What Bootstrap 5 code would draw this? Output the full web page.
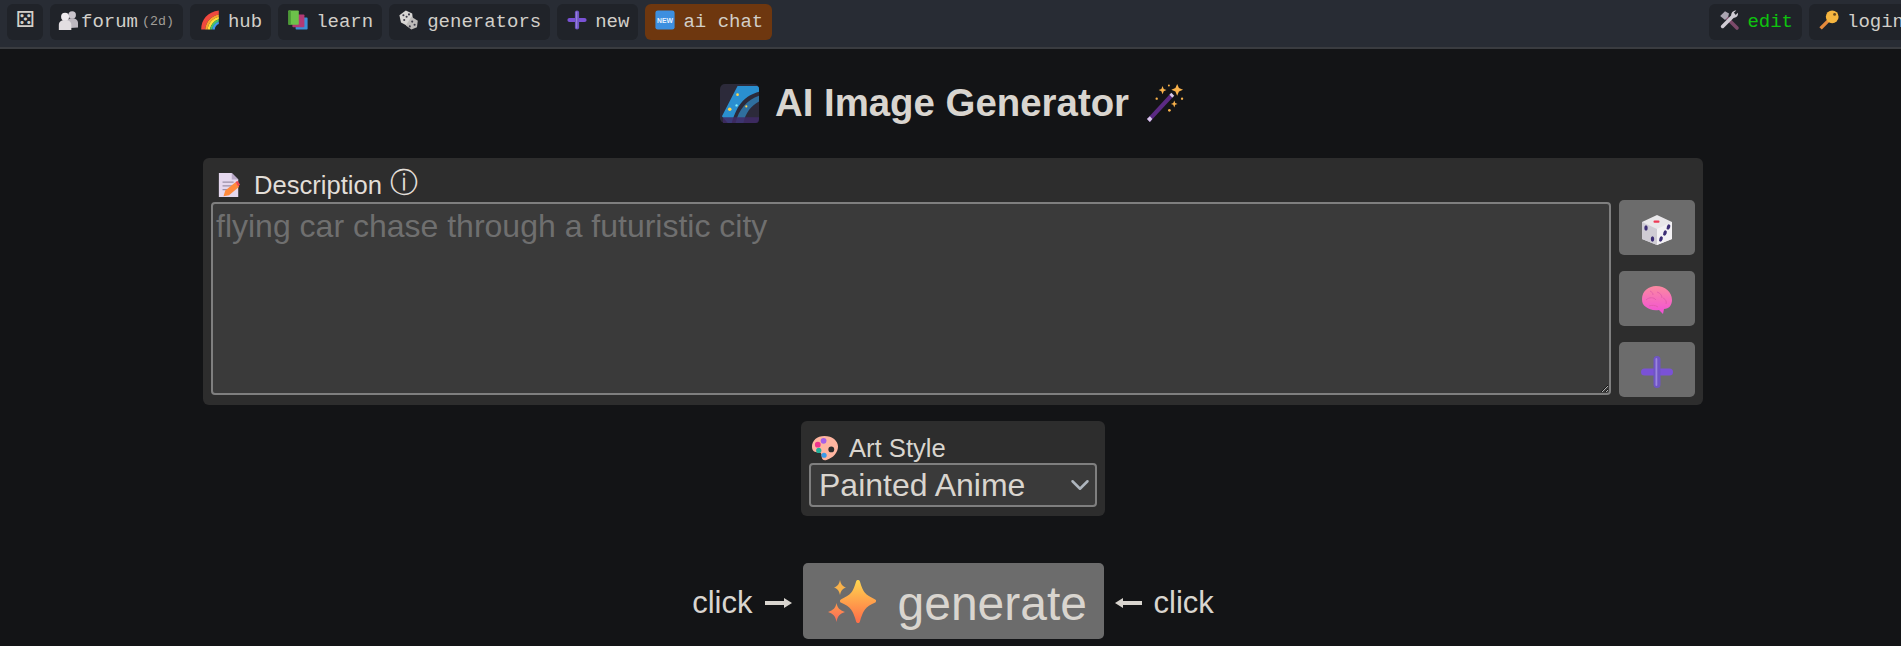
<!doctype html>
<html lang="en" data-bs-theme="dark">
<head>
<meta charset="utf-8">
<title>AI Image Generator</title>
<link href="https://cdn.jsdelivr.net/npm/bootstrap@5.3.0/dist/css/bootstrap.min.css" rel="stylesheet">
<script src="https://cdn.jsdelivr.net/npm/bootstrap@5.3.0/dist/js/bootstrap.bundle.min.js"></script>
<style>
html,body{height:646px;overflow:hidden;background:#131416;color:#d9d5cf;font-family:"Liberation Sans",Arial,sans-serif}
.pagewrap{width:1906px}
.topbar{height:49px;background:#282c34;border-bottom:2px solid #3a3c40;padding:4px 0 0 7px;gap:7px}
.topgroup{gap:7px}
.toplink{height:36px;background:#202329;border-radius:6px;padding:0 9px 0 8px;font-family:"Liberation Mono",monospace;font-size:19px;color:#d2cfc9;text-decoration:none;gap:6px;white-space:nowrap}
.toplink svg{width:24px;height:24px;flex:none;margin-top:-5px}
.toplink.tightlink{gap:4px}
.toplink.tightlink svg{width:20px;height:20px;margin-right:-1px}
.toplink .age{font-size:13.3px;color:#a09d98}
.toplink.chat{background:#6e370f}
.toplink .okgreen{color:#0ec30e}
.toplink.dieglyph{font-family:"DejaVu Sans",sans-serif;font-size:22px;line-height:1;width:36px;padding:0 0 5px}
.righttop{margin-right:-7px}
.pagetitle{font-size:38.4px;font-weight:700;line-height:44px;margin:0;padding-top:32px;gap:16px;color:#d9d5cf}
.pagetitle svg{width:39px;height:39px}
.pagetitle svg:last-child{margin-right:2px}
.panel{background:#2d2d2d;border-radius:6px}
.descpanel{width:1500px;height:247px;margin:33px auto 0;padding:8px}
.labelcol{padding-top:4px;padding-bottom:2px}
.fieldlabel{font-size:25.6px;line-height:30px;gap:13px;color:#e2ded8;padding-left:6px;margin-bottom:2px}
.fieldlabel svg{width:24px;height:26px}
.infoglyph{font-family:"DejaVu Sans",sans-serif;font-size:28px;line-height:24px;margin-left:-5px;position:relative;top:-2px}
.prompt.form-control{width:1400px;height:193px;background:#3a3a3a;border:2px solid #7f7f7f;border-radius:4px;font-size:32px;line-height:37px;padding:4px 3px 2px;color:#d9d5cf;box-shadow:none}
.prompt::placeholder{color:#6f6f6f;opacity:1}
.sidetools{width:76px;gap:16px;margin-left:8px}
.sidebtn{width:76px;height:55px;background:#6c6c6c;border:0;border-radius:5px;padding:0}
.sidebtn svg{width:32px;height:32px;margin-top:4px}
.stylepanel{width:304px;height:95px;margin:16px auto 0;padding:14px 8px}
.stylepanel .fieldlabel{line-height:27px;gap:10px;color:#d9d5cf;padding-left:3px;margin-bottom:1px}
.stylepanel .fieldlabel svg{width:27px;height:25px}
.stylepick.form-select{height:44px;background-color:#3a3a3a;border:2px solid #7f7f7f;border-radius:4px;font-size:32px;line-height:37px;padding:1px 32px 0 8px;color:#d9d5cf;box-shadow:none;background-size:20px 20px;background-position:right 5px center}
.gorow{margin-top:47px;gap:12px;font-size:31px}
.gorow>span{padding-top:4px}
.gobtn{width:301px;height:76px;background:#6c6c6c;border:0;border-radius:5px;color:#d9d5cf;font-size:48px;line-height:1;gap:22px;padding:0 0 0 25px}
.gobtn svg{width:48px;height:43px}
.gobtn span{padding-top:5px}
.gorow .arrow{width:27px;height:12px;flex:none;margin-top:3px}
.gorow .arrow.toright{margin-right:-1px}
.gorow .arrow.toleft{margin-left:-1px}
</style>
</head>
<body>
<svg width="0" height="0" class="d-block" aria-hidden="true">
<defs>
<linearGradient id="grad-spark" x1="0" y1="0" x2="0" y2="1"><stop offset="0" stop-color="#ffd24f"/><stop offset="1" stop-color="#ff7048"/></linearGradient>
<linearGradient id="grad-small" x1="0" y1="0" x2="0" y2="1"><stop offset="0" stop-color="#ff9a4a"/><stop offset="1" stop-color="#fb6a5a"/></linearGradient>
<linearGradient id="grad-brain" x1="0" y1="0" x2="0" y2="1"><stop offset="0" stop-color="#fb8aa0"/><stop offset="1" stop-color="#f24fd8"/></linearGradient>
<symbol id="ic-busts" viewBox="0 0 24 24"><circle cx="17" cy="6" r="4.500" fill="#c9c4cc"/><path d="M10 22V16c0-4 3-6 7-6s7 2 7 6v5z" fill="#bdb8c0"/><circle cx="8.500" cy="8" r="4.800" fill="#efebee"/><path d="M1 24v-6c0-4 3-6 7.500-6s7.500 2 7.500 6v6z" fill="#e2dee1"/></symbol>
<symbol id="ic-rainbow" viewBox="-3 -3 30 30"><path d="M1 24C1 11 9 2 23 0v5C13 7 7 14 6 24z" fill="#f0483e"/><path d="M6 24C7 14 13 7 23 5v3C15 10 10 16 9 24z" fill="#ffa12f"/><path d="M9 24C10 16 15 10 23 8v3C17 13 13 18 12 24z" fill="#ffe03a"/><path d="M12 24c1-6 5-11 11-13v3c-4 2-8 6-8 10z" fill="#47c46b"/><path d="M15 24c0-4 3-8 8-10v3c-3 1-5 4-5 7z" fill="#3f97f0"/></symbol>
<symbol id="ic-books" viewBox="-3 -3 30 30"><rect x="9" y="9" width="15" height="15" rx="1" fill="#3d8fd6"/><rect x="5" y="5" width="15" height="16" rx="1" fill="#b33a74"/><rect x="0" y="0" width="13" height="18" rx="1" fill="#6cc24a"/><rect x="0" y="0" width="3" height="18" fill="#4b9a36"/></symbol>
<symbol id="ic-dice" viewBox="-3 -3 30 30"><path d="M8 0l8 4 1 9-8 6-7-4-2-9z" fill="#d8d6d4"/><path d="M15 8l8 5-1 8-7 3-7-5z" fill="#bdbbb9"/><g fill="#3b3947"><circle cx="5" cy="6" r="1.300"/><circle cx="9" cy="8" r="1.300"/><circle cx="12" cy="5" r="1.300"/><circle cx="6" cy="12" r="1.300"/><circle cx="16" cy="14" r="1.300"/><circle cx="13" cy="20" r="1.300"/><circle cx="19" cy="18" r="1.300"/></g></symbol>
<symbol id="ic-plus" viewBox="0 0 32 32"><rect x="0" y="12.500" width="32" height="7" rx="3.500" fill="#7a52d6"/><rect x="12.500" y="0" width="7" height="32" rx="3.500" fill="#6f55c4"/><rect x="14.500" y="2" width="1.800" height="28" rx=".9" fill="#9a86dd"/></symbol>
<symbol id="ic-plus-small" viewBox="-4 -4 40 40"><rect x="0" y="12.500" width="32" height="7" rx="3.500" fill="#7a52d6"/><rect x="12.500" y="0" width="7" height="32" rx="3.500" fill="#6f55c4"/><rect x="14.500" y="2" width="1.800" height="28" rx=".9" fill="#9a86dd"/></symbol>
<symbol id="ic-new" viewBox="-3 -3 30 30"><rect x="0" y="0" width="24" height="24" rx="3" fill="#3d8fe0"/><text x="12" y="15.500" text-anchor="middle" font-family="Liberation Sans" font-size="8.500" font-weight="700" fill="#e8f2ff">NEW</text></symbol>
<symbol id="ic-tools" viewBox="-3 -3 30 30"><path d="M7 7l15 15" stroke="#7c4a6a" stroke-width="4.500" stroke-linecap="round"/><path d="M1 7l6-6 5 3-1 4-4 4z" fill="#a9a4b0"/><path d="M18 6L4 20" stroke="#cfcbd3" stroke-width="4.500" stroke-linecap="round"/><path d="M23 3c1 4-2 7-6 6l-2-2c-1-4 2-7 6-7l-3 3 2 3z" fill="#cfcbd3"/></symbol>
<symbol id="ic-key" viewBox="-3 -3 30 30"><path d="M3 24l-3-3 11-11 3 3z" fill="#e58a3c"/><circle cx="16" cy="8" r="8" fill="#f5b53f"/><circle cx="19" cy="5" r="1.800" fill="#6b4a1e"/></symbol>
<symbol id="ic-milky" viewBox="0 0 40 40"><rect width="40" height="40" rx="5" fill="#2c2a3a"/><path d="M2 33L18 2h19c3 0 3 2 3 3v3C26 12 18 20 12 40H8z" fill="#2a8fd0"/><path d="M16 40C19 26 28 16 40 12v6C32 22 26 30 24 40z" fill="#2f6f9e"/><path d="M3 40h34c2 0 3-1 3-4v-2H3z" fill="#3f2a66" opacity=".85"/><g fill="#ffd34d"><circle cx="18" cy="11" r="1.400"/><circle cx="10" cy="26" r="1.800"/><circle cx="27" cy="23" r="1.100"/></g><circle cx="17" cy="22" r="1.200" fill="#7ff0ff"/></symbol>
<symbol id="ic-wand" viewBox="0 0 40 40"><path d="M2 36L25 11l3 3L5 39z" fill="#5b2a83"/><path d="M2 36l3-3 2.500 3L5 39z" fill="#d9c8ea"/><path d="M25 11l2-2 3 3-2 2z" fill="#d9c8ea"/><g fill="#f9b24b"><path d="M33 0l1.800 4.200L39 6l-4.200 1.800L33 12l-1.800-4.200L27 6l4.200-1.800z"/><path d="M18 2l1.200 3L22 6.200 19.200 7.400 18 10.400l-1.200-3L14 6.200l2.800-1.200z"/><path d="M30 17l1 2.400 2.400 1-2.400 1L30 24l-1-2.600-2.400-1 2.400-1z"/><circle cx="24.500" cy="1.500" r="1"/><circle cx="12" cy="15" r="1.200"/><circle cx="38" cy="15" r="1.200"/><circle cx="25" cy="27" r="1.400"/></g></symbol>
<symbol id="ic-memo" viewBox="0 0 26 28" preserveAspectRatio="none"><path d="M2 1h14l7 7v19H2z" fill="#e5d8ee"/><path d="M16 1l7 7h-7z" fill="#b9a9c8"/><g stroke="#9a8fa8" stroke-width="1.300"><path d="M6 11h12M6 15h12M6 19h7"/></g><path d="M7 26l2-6 11-9 4 5-11 9z" fill="#ff8a3c"/><path d="M20 11l2-1.500 3 4-2 2z" fill="#f0484e"/></symbol>
<symbol id="ic-die3d" viewBox="0 0 32 32"><path d="M16 1l15 7v17l-15 6-15-6V8z" fill="#e9e7ea"/><path d="M16 15l15-7v17l-15 6z" fill="#f3f1f4"/><path d="M16 15L1 8v17l15 6z" fill="#cfccd4"/><rect x="12.500" y="6.500" width="6" height="2.200" rx="1" fill="#ee3a55"/><g fill="#3d2e75"><ellipse cx="5" cy="14" rx="1.700" ry="2.800"/><ellipse cx="11.500" cy="25" rx="1.700" ry="2.700"/><ellipse cx="20" cy="25" rx="1.700" ry="2.700" transform="rotate(20 20 25)"/><ellipse cx="24" cy="19" rx="1.700" ry="2.700" transform="rotate(20 24 19)"/><ellipse cx="27.500" cy="13" rx="1.700" ry="2.700" transform="rotate(20 27.500 13)"/></g></symbol>
<symbol id="ic-brain" viewBox="0 0 32 32"><path d="M1 14C1 6 8 1 15 1c9 0 16 6 16 14 0 5-3 9-8 9l-1 5-4-4c-6 1-10-1-13-3-3-2-4-4-4-8z" fill="url(#grad-brain)"/><g fill="none" stroke="#e05aa8" stroke-width=".8"><path d="M5 15c3-3 8-3 10 0M16 7c3 1 5 3 5 6M22 13c2 1 4 3 3 6M9 6c2 1 3 2 3 4M8 21c3-1 6-1 9 1"/></g></symbol>
<symbol id="ic-palette" viewBox="0 0 28 26" preserveAspectRatio="none"><path d="M13 0C5 0 0 5 0 11c0 5 3 6 6 6 3 0 4 1 4 4s2 5 5 4c7-2 12-8 12-14C27 5 21 0 13 0z" fill="#ffb5a0"/><circle cx="20" cy="14" r="3" fill="#2d2d2d"/><circle cx="6" cy="9" r="3" fill="#f0348e"/><circle cx="12" cy="5" r="3" fill="#a560e8"/><circle cx="7" cy="15" r="2.700" fill="#21b09a"/><circle cx="12.500" cy="20" r="2.700" fill="#3a9ae8"/></symbol>
<symbol id="ic-sparkles" viewBox="0 0 48 43"><path d="M30 2C33 13 36 17 46 21 36 25 33 30 30 41 27 30 24 25 14 21 24 17 27 13 30 2z" fill="url(#grad-spark)" stroke="url(#grad-spark)" stroke-width="4" stroke-linejoin="round"/><path d="M12 0c1 4 2 6 6 7.500-4 1.500-5 3.500-6 7.500-1-4-2-6-6-7.500 4-1.500 5-3.500 6-7.500z" fill="#f9b24b"/><path d="M8.500 23c1 5 3 7 8.500 9-5.500 2-7.500 4-8.500 10-1-6-3-8-8.500-10 5.500-2 7.500-4 8.500-9z" fill="url(#grad-small)"/></symbol>
</defs>
</svg>

<div class="pagewrap">
<nav class="topbar d-flex align-items-start">
  <div class="topgroup d-flex">
    <a class="toplink dieglyph d-flex align-items-center justify-content-center" href="#">⚄</a>
    <a class="toplink tightlink d-flex align-items-center" href="#"><svg><use href="#ic-busts"/></svg><span>forum</span><span class="age">(2d)</span></a>
    <a class="toplink d-flex align-items-center" href="#"><svg><use href="#ic-rainbow"/></svg>hub</a>
    <a class="toplink d-flex align-items-center" href="#"><svg><use href="#ic-books"/></svg>learn</a>
    <a class="toplink d-flex align-items-center" href="#"><svg><use href="#ic-dice"/></svg>generators</a>
    <a class="toplink d-flex align-items-center" href="#"><svg><use href="#ic-plus-small"/></svg>new</a>
    <a class="toplink chat d-flex align-items-center" href="#"><svg><use href="#ic-new"/></svg>ai chat</a>
  </div>
  <div class="topgroup righttop d-flex ms-auto">
    <a class="toplink d-flex align-items-center" href="#"><svg><use href="#ic-tools"/></svg><span class="okgreen">edit</span></a>
    <a class="toplink d-flex align-items-center" href="#"><svg><use href="#ic-key"/></svg>login</a>
  </div>
</nav>

<h1 class="pagetitle d-flex justify-content-center align-items-center">
  <svg><use href="#ic-milky"/></svg><span>AI Image Generator</span><svg><use href="#ic-wand"/></svg>
</h1>

<section class="panel descpanel">
  <div class="d-flex">
    <div class="labelcol">
      <label class="fieldlabel d-flex align-items-center" for="promptbox"><svg><use href="#ic-memo"/></svg><span>Description</span><span class="infoglyph">ⓘ</span></label>
      <textarea id="promptbox" class="prompt form-control" placeholder="flying car chase through a futuristic city"></textarea>
    </div>
    <div class="sidetools d-flex flex-column justify-content-end">
      <button class="sidebtn btn d-flex align-items-center justify-content-center" type="button" aria-label="random"><svg><use href="#ic-die3d"/></svg></button>
      <button class="sidebtn btn d-flex align-items-center justify-content-center" type="button" aria-label="brain"><svg><use href="#ic-brain"/></svg></button>
      <button class="sidebtn btn d-flex align-items-center justify-content-center" type="button" aria-label="add"><svg><use href="#ic-plus"/></svg></button>
    </div>
  </div>
</section>

<section class="panel stylepanel">
  <label class="fieldlabel d-flex align-items-center" for="stylebox"><svg><use href="#ic-palette"/></svg><span>Art Style</span></label>
  <select id="stylebox" class="stylepick form-select"><option>Painted Anime</option></select>
</section>

<div class="gorow d-flex justify-content-center align-items-center">
  <span>click</span>
  <svg class="arrow toright" viewBox="0 0 27 12"><path d="M0 4h19V1l8 5-8 5V8H0z" fill="#d9d5cf"/></svg>
  <button class="gobtn btn d-flex align-items-center" type="button"><svg><use href="#ic-sparkles"/></svg><span>generate</span></button>
  <svg class="arrow toleft" viewBox="0 0 27 12"><path d="M27 4H8V1L0 6l8 5V8h19z" fill="#d9d5cf"/></svg>
  <span>click</span>
</div>
</div>
</body>
</html>
